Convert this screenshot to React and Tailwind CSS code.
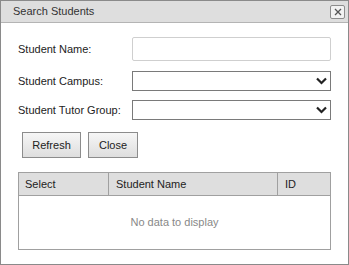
const Chevron = () => (
  <svg width="11" height="8" viewBox="0 0 11 8" className="shrink-0">
    <polyline points="1,1.5 5.5,6 10,1.5" fill="none" stroke="#222" strokeWidth="2.2" />
  </svg>
);

const SelectBox = () => (
  <div className="flex-1 h-[20px] border border-[#7a7a7a] bg-white flex items-center justify-end pr-[3px]">
    <Chevron />
  </div>
);

const Button = ({ children, w }) => (
  <button className={`${w} h-[26px] border border-[#8c8c8c] bg-gradient-to-b from-[#f6f6f6] to-[#dedede] text-[11px] text-[#222]`}>
    {children}
  </button>
);

export default function App() {
  return (
    <div
      className="w-[349px] h-[265px] border border-[#8a8a8a] bg-white flex flex-col"
      style={{ fontFamily: '"Liberation Sans", Arial, sans-serif' }}
    >
      {/* title bar */}
      <div className="h-[22px] bg-[#dedede] border-b border-[#b4b4b4] flex items-center justify-between pl-[12px] pr-[3px]">
        <span className="text-[11px] text-[#333]">Search Students</span>
        <div className="w-[15px] h-[14px] mt-[1px] border border-[#8c8c8c] rounded-[2px] bg-[#f2f2f2] flex items-center justify-center">
          <svg width="8" height="8" viewBox="0 0 8 8">
            <path d="M1 1 L7 7 M7 1 L1 7" stroke="#555" strokeWidth="1.3" />
          </svg>
        </div>
      </div>

      <div className="flex flex-col px-[17px] pt-[14px] text-[11px] text-[#222]">
        <div className="flex items-center h-[24px]">
          <label className="w-[114px]">Student Name:</label>
          <div className="flex-1 h-[24px] border border-[#cfcfcf] rounded-[2px]" />
        </div>
        <div className="flex items-center mt-[10px]">
          <label className="w-[114px]">Student Campus:</label>
          <SelectBox />
        </div>
        <div className="flex items-center mt-[9px]">
          <label className="w-[114px]">Student Tutor Group:</label>
          <SelectBox />
        </div>

        <div className="flex gap-[7px] mt-[12px] pl-[4px]">
          <Button w="w-[59px]">Refresh</Button>
          <Button w="w-[50px]">Close</Button>
        </div>

        {/* grid */}
        <div className="mt-[14px] border border-[#a0a0a0]">
          <div className="flex h-[23px] bg-[#dedede] border-b border-[#a0a0a0] items-center">
            <div className="w-[90px] h-full flex items-center pl-[6px] border-r border-[#a0a0a0]">Select</div>
            <div className="w-[169px] h-full flex items-center pl-[7px] border-r border-[#a0a0a0]">Student Name</div>
            <div className="flex-1 h-full flex items-center pl-[7px]">ID</div>
          </div>
          <div className="h-[53px] flex items-center justify-center text-[#888]">No data to display</div>
        </div>
      </div>
    </div>
  );
}
